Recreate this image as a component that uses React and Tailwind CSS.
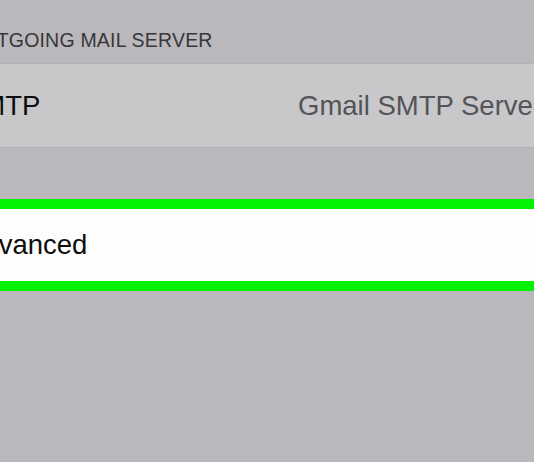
import React from 'react';

const font = { fontFamily: '"Liberation Sans", Arial, sans-serif' };

const App = () => {
  return (
    <div className="w-[534px] h-[462px] overflow-hidden bg-[#bab8bd]" style={font}>
      <div className="-ml-[50px] w-[606px] flex flex-col">
        <div className="h-[63px] pt-[30px] pl-[17px]">
          <p className="text-[19.5px] leading-[20px] text-[#37373a] tracking-[0.2px]">OUTGOING MAIL SERVER</p>
        </div>
        <div className="h-[85px] bg-[#c8c7ca] border-y border-[#b2b1b5] flex items-center justify-between pl-[14px] pr-[14px]">
          <span className="text-[27.5px] text-[#0d0d0d]">SMTP</span>
          <span className="text-[27.5px] text-[#545457]">Gmail SMTP Server</span>
        </div>
        <div className="h-[51px]" />
        <div className="border-y-[10px] border-[#03f203] bg-[#fdfdfd] h-[92px] flex items-center pl-[15px]">
          <span className="text-[27.5px] text-[#0d0d0d]">Advanced</span>
        </div>
      </div>
    </div>
  );
};

export default App;
